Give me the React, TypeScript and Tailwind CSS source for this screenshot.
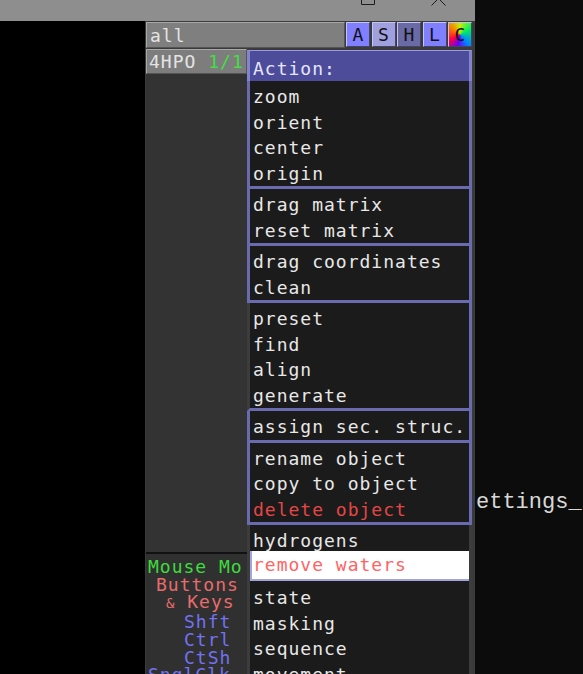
import React from 'react';

const mono = { fontFamily: '"DejaVu Sans Mono", "Liberation Mono", monospace' };

const groups: string[][] = [
  ['zoom', 'orient', 'center', 'origin'],
  ['drag matrix', 'reset matrix'],
  ['drag coordinates', 'clean'],
  ['preset', 'find', 'align', 'generate'],
  ['assign sec. struc.'],
  ['rename object', 'copy to object', 'delete object'],
];

function Bevel({ className, children }: { className: string; children?: React.ReactNode }) {
  return (
    <div
      className={`border-t border-l border-t-[#a8a8a8] border-l-[#a8a8a8] border-b border-r border-b-[#555] border-r-[#555] ${className}`}
    >
      {children}
    </div>
  );
}

function Toggle({ label, bg }: { label: string; bg: string }) {
  return (
    <div
      className={`w-[24px] h-[25px] flex items-center justify-center text-[18px] text-[#111] border-t border-l border-t-[#c4c4f0] border-l-[#c4c4f0] border-b border-r border-b-[#44446a] border-r-[#44446a] ${bg}`}
    >
      {label}
    </div>
  );
}

export default function App() {
  return (
    <div className="w-[583px] h-[674px] overflow-hidden bg-black flex flex-col" style={mono}>
      {/* window title bar, cut off */}
      <div className="h-[21px] flex shrink-0">
        <div className="w-[475px] bg-[#8e8e8e] flex pl-[361px]">
          <svg width="14" height="21" viewBox="0 0 14 21" className="shrink-0">
            <path d="M0.5 0 V4.5 H13.5 V0" fill="none" stroke="#1c1c1c" strokeWidth="1" />
          </svg>
          <svg width="16" height="21" viewBox="0 0 16 21" className="ml-[56px] shrink-0">
            <path d="M0.5 5.5 L7.5 -1.5 L14.5 5.5" fill="none" stroke="#1c1c1c" strokeWidth="1" />
          </svg>
        </div>
        <div className="flex-1 bg-[#0c0c0c]" />
      </div>

      <div className="flex flex-1 min-h-0">
        <div className="w-[145px] bg-black shrink-0" />

        {/* pymol object panel */}
        <div className="w-[330px] shrink-0 bg-[#3a3a3a] flex flex-col pl-[1px] pr-[3px]">
          <div className="mt-[1px] h-[26px] flex gap-[1.5px]">
            <Bevel className="flex-1 bg-[#7f7f7f] text-[#e4e4e4] text-[18px] tracking-[1px] leading-[25px] pl-[3px]">
              all
            </Bevel>
            <Toggle label="A" bg="bg-[#7f7fff]" />
            <Toggle label="S" bg="bg-[#a0a0e0]" />
            <Toggle label="H" bg="bg-[#6a6aa6]" />
            <Toggle label="L" bg="bg-[#7f7fff]" />
            <Toggle
              label="C"
              bg="bg-[conic-gradient(#c8f000,#00f060_60deg,#0088ff_140deg,#6000ff_190deg,#ff0040_240deg,#ff7000_300deg,#c8f000)]"
            />
          </div>

          <div className="flex flex-1 min-h-0 mt-[1px]">
            {/* left column */}
            <div className="w-[101px] shrink-0 flex flex-col">
              <Bevel className="h-[25px] bg-[#7d7d7d] text-[18px] tracking-[1px] leading-[23px] pl-[2px] whitespace-nowrap overflow-hidden">
                <span className="text-[#e4e4e4]">4HPO</span> <span className="text-[#44dd44]">1/1</span>
              </Bevel>
              <div className="h-[478px] bg-[#333333]" />
              <div className="h-[2px] bg-[#111]" />
              <div className="flex-1 bg-[#303030] pt-[4px] text-[18px] tracking-[1px] leading-[17.7px] whitespace-nowrap overflow-hidden">
                <div className="pl-[2px] text-[#3ddc3d]">Mouse Mo</div>
                <div className="pl-[10px] text-[#e86c6c]">Buttons</div>
                <div className="pl-[20px] text-[#e86c6c]">
                  <span className="text-[14px]">&amp;</span> Keys
                </div>
                <div className="pl-[38px] text-[#7272f2]">Shft</div>
                <div className="pl-[38px] text-[#7272f2]">Ctrl</div>
                <div className="pl-[38px] text-[#7272f2]">CtSh</div>
                <div className="pl-[2px] text-[#7272f2]">SnglClk</div>
              </div>
            </div>

            {/* Action popup menu */}
            <div className="w-[225px] shrink-0 flex flex-col mt-[1px] text-[18px] tracking-[1px] whitespace-nowrap overflow-hidden">
              <div className="h-[31px] bg-[#4c4c9a] border-t border-x-[3px] border-t-[#9a9ae0] border-x-[#8484cc] text-[#e6e6ff] leading-[35px] pl-[3px]">
                Action:
              </div>
              {groups.map((g, gi) => (
                <div
                  key={gi}
                  className={`bg-[#1b1b1b] border-r-[3px] border-b-[3px] border-r-[#6a6aae] border-b-[#6a6aae] border-l-[3px] pt-[3px] ${
                    gi === 3 ? 'border-l-[#3c3c3c]' : 'border-l-[#6a6aae]'
                  }`}
                >
                  {g.map((item) => (
                    <div
                      key={item}
                      className={`h-[25.5px] leading-[25.5px] pl-[3px] ${
                        item === 'delete object' ? 'text-[#e44646]' : 'text-[#e8e8e8]'
                      }`}
                    >
                      {item}
                    </div>
                  ))}
                </div>
              ))}
              <div className="flex-1 bg-[#1b1b1b] border-x-[3px] border-x-[#3c3c3c] pt-[3px]">
                <div className="h-[23px] leading-[25.5px] pl-[3px] text-[#e8e8e8]">hydrogens</div>
                <div className="h-[30px] bg-white border-l-[2px] border-b-[2px] border-[#a4a4dc] leading-[28px] pl-[1px] text-[#ff6464]">
                  remove waters
                </div>
                <div className="pt-[4px]">
                  {['state', 'masking', 'sequence', 'movement'].map((item) => (
                    <div key={item} className="h-[25.5px] leading-[25.5px] pl-[3px] text-[#e8e8e8]">
                      {item}
                    </div>
                  ))}
                </div>
              </div>
            </div>
          </div>
        </div>

        {/* terminal behind */}
        <div className="flex-1 bg-[#0c0c0c] pt-[469px] pl-[1px] overflow-hidden whitespace-nowrap">
          <div
            className="text-[22px] leading-[26px] text-[#d8d8d8]"
            style={{ fontFamily: '"Liberation Mono", monospace' }}
          >
            ettings_
          </div>
        </div>
      </div>
    </div>
  );
}
